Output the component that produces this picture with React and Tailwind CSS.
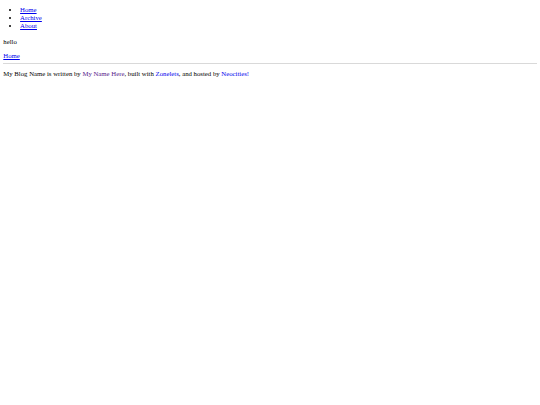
export default function App() {
  const link = "text-[#0000ee] underline decoration-[0.7px] underline-offset-[1px]";
  return (
    <div className="font-['Liberation_Serif',serif] text-[6.75px] leading-[7.7px] text-black px-[3.3px] pt-[6.4px]">
      <ul className="list-disc pl-[16.8px]">
        <li><a href="#" className={link}>Home</a></li>
        <li><a href="#" className={link}>Archive</a></li>
        <li><a href="#" className={link}>About</a></li>
      </ul>
      <p className="mt-[8.6px]">hello</p>
      <p className="mt-[6.3px]"><a href="#" className={link}>Home</a></p>
      <hr className="mt-[3.4px] border-0 border-t-[1.6px] border-[#d9d9d9]" />
      <p className="mt-[5.5px]">
        My Blog Name is written by <a href="#" className="text-[#551a8b] underline decoration-[0.7px] underline-offset-[1px]">My Name Here</a>, built with{" "}
        <a href="#" className={link}>Zonelets</a>, and hosted by <a href="#" className={link}>Neocities!</a>
      </p>
    </div>
  );
}
